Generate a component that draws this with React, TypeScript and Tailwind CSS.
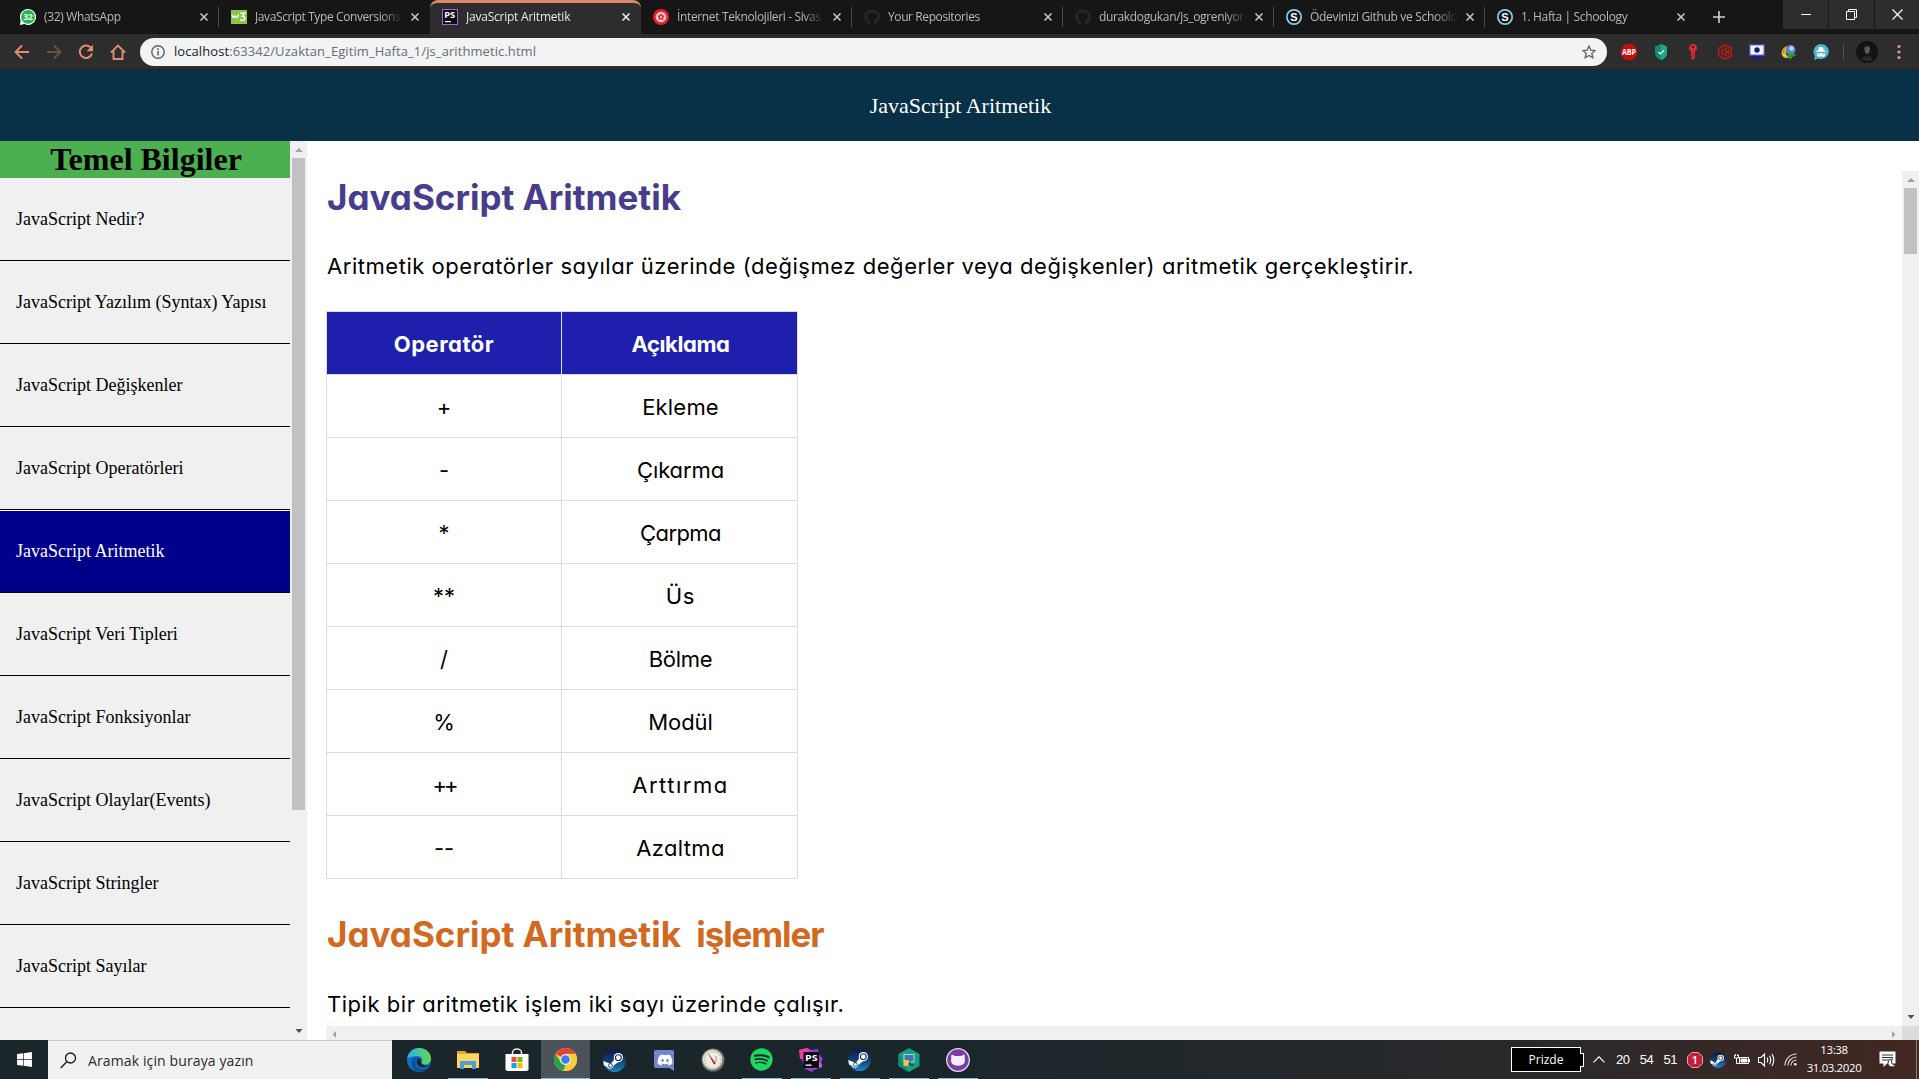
import type { ReactNode } from 'react'
import { FaDiscord, FaGithub, FaSpotify, FaWindows } from 'react-icons/fa'

/* ---------- small shared icons ---------- */

function CloseIcon({ light }: { light?: boolean }) {
  return (
    <svg width="8" height="8" viewBox="0 0 8 8" className="shrink-0">
      <path d="M0.5 0.5 7.5 7.5M7.5 0.5 0.5 7.5" stroke={light ? '#f0f0f0' : '#c9c9c9'} strokeWidth="1.5" fill="none" />
    </svg>
  )
}

function WhatsAppIcon() {
  return (
    <svg width="16" height="16" viewBox="0 0 16 16">
      <path d="M8 0a8 8 0 1 1-3.6 15.1L0 16l.6-4.700A8 8 0 0 1 8 0Z" fill="#fff" />
      <circle cx="8" cy="7.900" r="6.900" fill="#1fb84f" />
      <text x="8" y="11" textAnchor="middle" fontSize="8" fontWeight="700" fill="#fff" fontFamily="Open Sans, sans-serif">32</text>
    </svg>
  )
}

function W3Icon() {
  return (
    <svg width="16" height="14" viewBox="0 0 16 14">
      <rect width="16" height="14" fill="#8bc541" />
      <path d="M1 4.500c.3 3 2.300 3.500 3 1 .5 3 3 2.500 3.300-1" fill="none" stroke="#fff" strokeWidth="1.500" />
      <path d="M9.300 3.300h4.400L11.300 6.300c3.200-.2 3.300 4.200.3 4.200-1.300 0-2-.5-2.300-1.500" fill="none" stroke="#fff" strokeWidth="1.600" />
    </svg>
  )
}

function PhpStormTabIcon() {
  return (
    <svg width="16" height="16" viewBox="0 0 16 16">
      <rect x="0.500" y="0.500" width="15" height="15" fill="#0c0a10" stroke="#a55fd8" />
      <text x="2.200" y="9" fontSize="8.500" fontWeight="700" fill="#fff" fontFamily="Open Sans, sans-serif" textLength="11" lengthAdjust="spacingAndGlyphs">PS</text>
      <rect x="3" y="12" width="6" height="1.200" fill="#fff" />
    </svg>
  )
}

function UniversityIcon() {
  return (
    <svg width="16" height="16" viewBox="0 0 16 16">
      <circle cx="8" cy="8" r="8" fill="#e3202b" />
      <circle cx="8" cy="8" r="5.300" fill="#fbc4c6" />
      <path d="m8 4.200 1.200 2.100 2.600.5-1.700 1.900.3 2.500L8 10.100l-2.400 1.100.3-2.500-1.700-1.900 2.600-.5z" fill="#e3202b" />
      <circle cx="8" cy="8" r="0.900" fill="#fff" />
    </svg>
  )
}

function SchoologyIcon() {
  return (
    <svg width="16" height="16" viewBox="0 0 16 16">
      <circle cx="8" cy="8" r="8" fill="#8fd0e8" />
      <circle cx="8" cy="8" r="6.300" fill="#0f161b" />
      <text x="8" y="12" textAnchor="middle" fontSize="11" fontWeight="700" fill="#fff" fontFamily="Liberation Sans, sans-serif">S</text>
    </svg>
  )
}

/* ---------- browser window ---------- */

const tabs: { title: string; icon: ReactNode; active?: boolean; divider?: boolean; spacing: string }[] = [
  { title: '(32) WhatsApp', icon: <WhatsAppIcon />, divider: true, spacing: 'tracking-[-0.35px]' },
  { title: 'JavaScript Type Conversions', icon: <W3Icon />, spacing: 'tracking-[-0.4px]' },
  { title: 'JavaScript Aritmetik', icon: <PhpStormTabIcon />, active: true, spacing: 'tracking-[-0.23px]' },
  { title: 'İnternet Teknolojileri - Sivas', icon: <UniversityIcon />, divider: true, spacing: 'tracking-[-0.36px]' },
  { title: 'Your Repositories', icon: <FaGithub size={16} color="#22272c" />, divider: true, spacing: 'tracking-[-0.4px]' },
  { title: 'durakdogukan/js_ogreniyor', icon: <FaGithub size={16} color="#22272c" />, divider: true, spacing: 'tracking-[-0.35px]' },
  { title: 'Ödevinizi Github ve Schoology', icon: <SchoologyIcon />, divider: true, spacing: 'tracking-[-0.32px]' },
  { title: '1. Hafta | Schoology', icon: <SchoologyIcon />, spacing: 'tracking-[-0.35px]' },
]

function TabStrip() {
  return (
    <div className="flex h-[34px] bg-[#161616] pl-2">
      {tabs.map((tab) => (
        <div
          key={tab.title}
          className={
            tab.active
              ? 'flex h-[34px] w-[211px] items-center rounded-t-lg border-t-[3px] border-[#d98768] bg-[#2d2d2d] pr-[11px] pb-[3px] pl-3'
              : 'flex h-[34px] w-[211px] items-center pl-3'
          }
        >
          <span className="flex h-4 w-4 shrink-0 items-center">{tab.icon}</span>
          <span
            className={
              (tab.active ? 'text-[#e8e8e8] ' : 'text-[#b8b8b8] ') +
              'ml-2 w-[148px] shrink-0 overflow-hidden text-xs whitespace-nowrap [mask-image:linear-gradient(to_right,black_85%,transparent)] ' +
              tab.spacing
            }
          >
            {tab.title}
          </span>
          <span className="ml-2 flex shrink-0">
            <CloseIcon light={tab.active} />
          </span>
          {tab.divider && <span className="ml-[10px] h-5 w-px shrink-0 bg-[#4a4a4a]" />}
        </div>
      ))}
      <div className="flex w-[46px] items-center justify-center">
        <svg width="12" height="12" viewBox="0 0 12 12">
          <path d="M6 0v12M0 6h12" stroke="#d0d0d0" strokeWidth="1.600" />
        </svg>
      </div>
      <div className="ml-auto flex h-[29px] gap-px">
        <div className="flex w-[45px] items-center justify-center bg-[#2d2d2d]">
          <span className="h-px w-[10px] bg-white" />
        </div>
        <div className="flex w-[45px] items-center justify-center bg-[#2d2d2d]">
          <svg width="11" height="11" viewBox="0 0 11 11" fill="none" stroke="#fff">
            <path d="M0.500 2.500h8v8h-8zM2.500 2.500v-2h8v8h-2" />
          </svg>
        </div>
        <div className="flex w-[44px] items-center justify-center bg-[#2d2d2d]">
          <svg width="11" height="11" viewBox="0 0 11 11" fill="none" stroke="#fff" strokeWidth="1.200">
            <path d="M0.500 0.500l10 10M10.500 0.500l-10 10" />
          </svg>
        </div>
      </div>
    </div>
  )
}

function Extensions() {
  return (
    <div className="flex items-center gap-4">
      <svg width="16" height="16" viewBox="0 0 16 16">
        <path d="M4.700 0h6.600L16 4.700v6.600L11.300 16H4.700L0 11.300V4.700z" fill="#c70d0d" />
        <text x="1" y="11" fontSize="8.500" fontWeight="700" fill="#fff" fontFamily="Open Sans, sans-serif" textLength="14" lengthAdjust="spacingAndGlyphs">ABP</text>
      </svg>
      <svg width="16" height="16" viewBox="0 0 16 16">
        <path d="M8 0l6 2.500v6c0 4-2.500 6-6 7.500-3.500-1.500-6-3.500-6-7.500v-6z" fill="#138a72" />
        <path d="M8 0l6 2.500v6c0 4-2.500 6-6 7.500z" fill="#1ea688" />
        <path d="M5.500 8l2 2 3.500-3.800" fill="none" stroke="#fff" strokeWidth="1.200" />
      </svg>
      <svg width="16" height="16" viewBox="0 0 16 16">
        <path d="M8 0a4 4 0 0 1 2 7.500V14l-2 2-2-2V7.500A4 4 0 0 1 8 0z" fill="#d8293a" />
        <circle cx="8" cy="3" r="1.200" fill="#2d2d2d" />
        <path d="M8 8v6" stroke="#8d1b28" strokeWidth="0.800" />
      </svg>
      <svg width="16" height="16" viewBox="0 0 16 16" fill="none" stroke="#d31414" strokeWidth="1.300">
        <path d="M8 0.800l6.300 3.600v7.200L8 15.200l-6.300-3.600V4.400z" />
        <path d="M7.500 5 4.800 6.500v3L7.500 11M9 2.500v11M9 8h2.500M11.800 5v6" />
      </svg>
      <svg width="16" height="16" viewBox="0 0 16 16">
        <path d="M0 9h16v3.500L8 16l-8-3.500z" fill="#20207c" />
        <rect x="0.700" y="0.700" width="14.600" height="10.600" fill="#f4f6ff" stroke="#3f49bd" strokeWidth="1.400" />
        <circle cx="8" cy="6" r="2.700" fill="#1b1f6f" />
      </svg>
      <svg width="16" height="16" viewBox="0 0 16 16">
        <circle cx="9.500" cy="6" r="5" fill="#5a86cf" />
        <circle cx="10.500" cy="4.500" r="2.200" fill="#c5d9f3" />
        <path d="M6 2C1 4 -.5 9 1.500 12c1.500 2.300 5 2.500 7 1C4.500 12 3.500 7 6 2z" fill="#e8cf3a" />
        <path d="M6 2c-2.500 2-3.500 5-2.500 8L1.500 9C2 6 3.500 3.500 6 2z" fill="#d9652c" />
        <path d="M7 8.500l9 2.500-4 1.500L9 16l-1-3-4-1 3-.5z" fill="#2f9c27" />
      </svg>
      <svg width="16" height="16" viewBox="0 0 16 16">
        <path d="M8 0a8 7.500 0 1 1-3 14.500L1 16l1-3.600A7.800 7.800 0 0 1 8 0z" fill="#4fb4cf" />
        <path d="M5.300 6.500 6 3h4l.7 3.500h2v1.300H3.300V6.500z" fill="#fff" />
        <path d="M4 9h8v2.500l-2 1.500h-1L8 11.500 7 13H6l-2-1.500z" fill="#fff" />
        <path d="M5 10h2M9 10h2" stroke="#4fb4cf" />
      </svg>
    </div>
  )
}

function Toolbar() {
  return (
    <div className="flex h-9 items-center border-b border-[#222] bg-[#2d2d2d] pt-px pl-[14px]">
      <div className="flex items-center gap-4 text-[#e08d6c]">
        <svg width="16" height="16" viewBox="0 0 16 16" fill="none" stroke="currentColor" strokeWidth="1.900">
          <path d="M15 8H2M8 1.500 1.500 8 8 14.500" />
        </svg>
        <svg width="16" height="16" viewBox="0 0 16 16" fill="none" stroke="#70503f" strokeWidth="1.900">
          <path d="M1 8h13M8 1.500 14.500 8 8 14.500" />
        </svg>
        <svg width="16" height="16" viewBox="0 0 16 16" fill="none" stroke="currentColor" strokeWidth="2">
          <path d="M13.300 4.500A6.200 6.200 0 1 0 14 9.500" />
          <path d="M15 0.800v6.400H8.600z" fill="currentColor" stroke="none" />
        </svg>
        <svg width="16" height="16" viewBox="0 0 16 16" fill="none" stroke="currentColor" strokeWidth="1.900">
          <path d="M1 8.500 8 1.500l7 7M3.500 7v8h9V7" />
        </svg>
      </div>
      <div className="ml-[14px] flex h-7 w-[1467px] items-center rounded-full bg-[#f1f3f4] pr-[11px] pl-[11px]">
        <svg width="14" height="14" viewBox="0 0 14 14" fill="none" stroke="#5f6368" strokeWidth="1.400">
          <circle cx="7" cy="7" r="6.200" />
          <path d="M7 6v4.500M7 3.300v1.600" strokeWidth="1.600" />
        </svg>
        <span className="ml-[9px] text-[13px] tracking-[0.08px] text-[#6a6d71]">
          <span className="text-[#202124]">localhost</span>:63342/Uzaktan_Egitim_Hafta_1/js_arithmetic.html
        </span>
        <svg width="14" height="14" viewBox="0 0 16 16" className="ml-auto" fill="none" stroke="#5f6368" strokeWidth="1.500">
          <path d="M8 1.200l2 4.700 5 .4-3.800 3.300 1.200 5L8 12l-4.400 2.600 1.200-5L1 6.300l5-.4z" />
        </svg>
      </div>
      <div className="ml-[14px] flex items-center">
        <Extensions />
        <span className="ml-[14px] h-4 w-px bg-[#6b4a3e]" />
        <svg width="22" height="22" viewBox="0 0 22 22" className="ml-[12px]">
          <circle cx="11" cy="11" r="11" fill="#131313" />
          <path d="M8.500 7.500a2.700 3.200 0 0 1 5.400 0l-.4 3.500-2.300 2.600L8.900 11z" fill="#5a5a5a" />
          <path d="M8.300 7.300c0-4.500 6-4.500 5.900 0l-1-1.500H9.300z" fill="#1d1d1d" />
          <path d="M5.500 18.500 9 14.500l2.200 1.500 2.300-1.500 3.500 4A11 11 0 0 1 5.500 18.500z" fill="#292929" />
        </svg>
        <svg width="4" height="16" viewBox="0 0 4 16" className="ml-[19px]" fill="#e39c86">
          <circle cx="2" cy="2.500" r="1.600" />
          <circle cx="2" cy="8" r="1.600" />
          <circle cx="2" cy="13.500" r="1.600" />
        </svg>
      </div>
    </div>
  )
}

/* ---------- page content ---------- */

const menu = [
  'JavaScript Nedir?',
  'JavaScript Yazılım (Syntax) Yapısı',
  'JavaScript Değişkenler',
  'JavaScript Operatörleri',
  'JavaScript Aritmetik',
  'JavaScript Veri Tipleri',
  'JavaScript Fonksiyonlar',
  'JavaScript Olaylar(Events)',
  'JavaScript Stringler',
  'JavaScript Sayılar',
]

function Arrow({ d, color }: { d: string; color: string }) {
  return (
    <svg width="8" height="8" viewBox="0 0 8 8" fill={color} className="shrink-0">
      <path d={d} />
    </svg>
  )
}

const UP = 'M0 6 4 2l4 4z'
const DOWN = 'M0.500 2h7L4 6z'
const LEFT = 'M6 1v7L2.500 4.500z'
const RIGHT = 'M2 1v7l3.500-3.500z'

function Sidebar() {
  return (
    <div className="flex h-[899px] w-[307px] shrink-0 bg-[#f0f0f0]">
      <nav className="h-[899px] w-[290px] overflow-hidden font-['Liberation_Serif',serif] text-black">
        <h1 className="h-[37px] bg-[#4caf50] pl-0.5 text-center text-[32px] leading-[37px] font-bold">Temel Bilgiler</h1>
        {menu.map((item) =>
          item === 'JavaScript Aritmetik' ? (
            <div key={item} className="flex h-[83px] items-center border-t border-b border-t-white border-b-black bg-[#00008b] px-4 pb-px text-lg text-white">
              {item}
            </div>
          ) : (
            <div key={item} className="flex h-[83px] items-center border-b border-black px-4 text-lg">
              {item}
            </div>
          ),
        )}
      </nav>
      <div className="flex w-[17px] flex-col items-center py-[5px]">
        <Arrow d={UP} color="#a3a3a3" />
        <div className="mt-1 h-[652px] w-[13px] bg-[#c1c1c1]" />
        <div className="mt-auto">
          <Arrow d={DOWN} color="#505050" />
        </div>
      </div>
    </div>
  )
}

const operators: { sign: string; name: string; spacing: string }[] = [
  { sign: '+', name: 'Ekleme', spacing: 'tracking-[0.2px]' },
  { sign: '-', name: 'Çıkarma', spacing: 'tracking-[-0.1px]' },
  { sign: '*', name: 'Çarpma', spacing: 'tracking-[-0.6px]' },
  { sign: '**', name: 'Üs', spacing: 'tracking-[0.8px]' },
  { sign: '/', name: 'Bölme', spacing: 'tracking-[-0.3px]' },
  { sign: '%', name: 'Modül', spacing: 'tracking-[-0.1px]' },
  { sign: '++', name: 'Arttırma', spacing: 'tracking-[1.5px]' },
  { sign: '--', name: 'Azaltma', spacing: 'tracking-[0.35px]' },
]

function Lesson() {
  return (
    <main className="h-[885px] flex-1 overflow-hidden pl-[19px] font-['Comic_Sans_MS',Inter,sans-serif] text-[22px] text-black [font-feature-settings:'cv11']">
      <h1 className="mt-[31px] pl-px text-[35px] leading-[50px] font-bold text-[#483d8b]">JavaScript Aritmetik</h1>
      <p className="mt-[27px] pl-px leading-[34px] tracking-[0.54px]">
        Aritmetik operatörler sayılar üzerinde (değişmez değerler veya değişkenler) aritmetik gerçekleştirir.
      </p>
      <div className="mt-7 w-[472px] border-t border-l border-[#dcdcdc] text-center">
        <div className="flex h-[63px] bg-[#1f1fad] leading-[62px] font-bold text-white">
          <div className="w-[235px] border-r border-b border-[#dcdcf4] pt-px tracking-[0.5px]">Operatör</div>
          <div className="w-[236px] border-r border-b border-[#dcdcf4] pt-px pl-0.5 tracking-[-0.4px]">Açıklama</div>
        </div>
        {operators.map(({ sign, name, spacing }) => (
          <div key={sign} className="flex h-[63px] leading-[62px]">
            <div
              className={
                sign === '++'
                  ? 'w-[235px] border-r border-b border-[#dcdcdc] pt-px tracking-[-3px]'
                  : 'w-[235px] border-r border-b border-[#dcdcdc] pt-px'
              }
            >
              {sign}
            </div>
            <div className={'w-[236px] border-r border-b border-[#dcdcdc] pt-px pl-0.5 ' + spacing}>{name}</div>
          </div>
        ))}
      </div>
      <h1 className="mt-[30px] pl-px text-[35px] leading-[50px] font-bold text-[#d2691e]">
        JavaScript Aritmetik <span className="ml-[7px] tracking-[-1.100px]">işlemler</span>
      </h1>
      <p className="mt-7 pl-px leading-[34px] tracking-[0.53px]">Tipik bir aritmetik işlem iki sayı üzerinde çalışır.</p>
    </main>
  )
}

function Page() {
  return (
    <div className="h-[970px] bg-white">
      <header className="flex h-[71px] items-center justify-center bg-[#083147] pl-0.5 font-['Liberation_Serif',serif] text-[22px] text-white">
        JavaScript Aritmetik
      </header>
      <div className="flex h-[899px]">
        <Sidebar />
        <div className="flex min-w-0 flex-1 flex-col">
          <div className="flex h-[885px]">
            <Lesson />
            <div className="mt-[30px] flex h-[855px] w-[17px] flex-col items-center bg-[#f0f0f0] py-[5px]">
              <Arrow d={UP} color="#a3a3a3" />
              <div className="mt-1 h-[66px] w-[13px] bg-[#c1c1c1]" />
              <div className="mt-auto">
                <Arrow d={DOWN} color="#505050" />
              </div>
            </div>
          </div>
          <div className="ml-[19px] flex h-[14px] bg-[#f0f0f0]">
            <div className="flex flex-1 items-center justify-between px-1 pt-px">
              <Arrow d={LEFT} color="#a3a3a3" />
              <Arrow d={RIGHT} color="#a3a3a3" />
            </div>
            <div className="w-[17px] bg-[#dcdcdc]" />
          </div>
        </div>
      </div>
    </div>
  )
}

/* ---------- taskbar ---------- */

function EdgeIcon() {
  return (
    <svg width="24" height="24" viewBox="0 0 24 24">
      <defs>
        <linearGradient id="edgeTop" x1="0" x2="1">
          <stop offset="0" stopColor="#2bb3e6" />
          <stop offset="1" stopColor="#62d84e" />
        </linearGradient>
      </defs>
      <circle cx="12" cy="12" r="12" fill="#1270c4" />
      <path d="M0.300 10C1.500 4 6 0 12 0c7 0 12 5 12 10.500 0 4-3 6-6.200 6-2.500 0-4-1-3.200-2.300 2-3-.3-6.200-4-6.200-4.500 0-8.500 1.500-10.300 2z" fill="url(#edgeTop)" />
      <path d="M10.500 9C7 11 7 18 13 20.500c4 1.500 7-.5 8.500-1.500A12 12 0 0 1 12 24C6 23 3.500 17 5 13c1-2.500 3-4 5.500-4z" fill="#0c4f9b" />
      <path d="M11 10c-3 3-1 9 4.500 9.500 3 .2 5-1 6.800-2.500-2 .8-6 1-7.700-1.800-1.500-1 1.300-4-3.600-5.200z" fill="#1a2830" />
    </svg>
  )
}

function FolderIcon() {
  return (
    <svg width="22" height="20" viewBox="0 0 22 20">
      <path d="M0 1h8l2 2h12v15H0z" fill="#e3a52c" />
      <rect y="4" width="22" height="14" fill="#fcd462" />
      <path d="M3 11h16v8h-4v-4H7v4H3z" fill="#4a9fdc" />
    </svg>
  )
}

function StoreIcon() {
  return (
    <svg width="24" height="24" viewBox="0 0 24 24">
      <path d="M7.500 7V4.500a4.500 3.500 0 0 1 9 0V7" fill="none" stroke="#e8eaec" strokeWidth="1.500" />
      <path d="M0.500 6h23v15.500L22 23H2l-1.500-1.500z" fill="#fff" />
      <rect x="6.500" y="9" width="5" height="5" fill="#f25022" />
      <rect x="12.500" y="9" width="5" height="5" fill="#7fba00" />
      <rect x="6.500" y="15" width="5" height="5" fill="#00a4ef" />
      <rect x="12.500" y="15" width="5" height="5" fill="#ffb900" />
    </svg>
  )
}

function ChromeIcon() {
  return (
    <svg width="23" height="23" viewBox="0 0 24 24">
      <circle cx="12" cy="12" r="12" fill="#f8cc3c" />
      <path d="M12 12 1.600 6A12 12 0 0 1 22.400 6z" fill="#e24435" />
      <path d="M12 6h10.400A12 12 0 0 1 12 24l5-9z" fill="#f8cc3c" />
      <path d="M1.600 6 7 15l5 3-2.500 5.800A12 12 0 0 1 1.600 6z" fill="#2ba14b" />
      <circle cx="12" cy="12" r="5.700" fill="#f3f3f3" />
      <circle cx="12" cy="12" r="4.500" fill="#3f7ee8" />
    </svg>
  )
}

function SteamIcon({ size }: { size: 'large' | 'small' }) {
  return (
    <svg viewBox="0 0 24 24" className={size === 'large' ? 'h-[23px] w-[23px]' : 'h-4 w-4'}>
      <defs>
        <linearGradient id="steamFill" x1="0" y1="0" x2="0" y2="1">
          <stop offset="0" stopColor="#10193f" />
          <stop offset="0.500" stopColor="#123b73" />
          <stop offset="1" stopColor="#1b86c0" />
        </linearGradient>
      </defs>
      <circle cx="12" cy="12" r="12" fill="url(#steamFill)" />
      <path d="M0.300 12.500 8 15.600l5-6.100 3 4-5 4A3.700 3.700 0 0 1 4 18.500l-3-1.300z" fill="#fff" />
      <circle cx="16" cy="9" r="4.800" fill="#fff" />
      <circle cx="16" cy="9" r="3" fill="#fff" stroke="#16305f" strokeWidth="1.200" />
      <circle cx="7.800" cy="17.300" r="2" fill="none" stroke="#16305f" strokeWidth="0.900" />
    </svg>
  )
}

function DiscordIcon() {
  return (
    <svg width="20" height="22" viewBox="0 0 20 22">
      <path d="M2 1h16a2 2 0 0 1 2 2v19l-4.500-3H2a2 2 0 0 1-2-2V3a2 2 0 0 1 2-2z" fill="#7386cc" />
      <FaDiscord x="3" y="3" width="14" height="14" color="#fff" />
    </svg>
  )
}

function GaugeIcon() {
  return (
    <svg width="24" height="24" viewBox="0 0 24 24">
      <circle cx="12" cy="12" r="11.500" fill="#75736f" />
      <circle cx="11.500" cy="11.500" r="10" fill="#dedbd5" />
      <circle cx="12" cy="12" r="8" fill="#efece6" stroke="#a9a49b" strokeWidth="1" strokeDasharray="1 2" />
      <path d="M6.500 4.500 15 15.500l-2 1z" fill="#b5261e" />
      <path d="M15 8v6" stroke="#8a8580" strokeWidth="0.800" />
    </svg>
  )
}

function PhpStormIcon() {
  return (
    <svg width="24" height="24" viewBox="0 0 24 24">
      <path d="M0 2 8 0l5 2 6-1 1 5 4 5-2 3 1 5-7 1-3 4-7-3-3-9z" fill="#8f3fe0" />
      <path d="M0 2 8 0l3 4-8 7-2 0z" fill="#f13c9a" />
      <path d="M14 22l9-3-1-5-5 3z" fill="#d45af0" />
      <rect x="4.500" y="4" width="15.500" height="16" fill="#08060b" />
      <text x="6" y="12.500" fontSize="9.500" fontWeight="700" fill="#fff" fontFamily="Open Sans, sans-serif" textLength="12.500" lengthAdjust="spacingAndGlyphs">PS</text>
      <rect x="6.500" y="16.500" width="6" height="1.300" fill="#fff" />
    </svg>
  )
}

function HexIcon() {
  return (
    <svg width="24" height="24" viewBox="0 0 24 24">
      <path d="M12 0l10.500 6v12L12 24 1.500 18V6z" fill="#12a182" />
      <path d="M12 24 1.500 18V6z" fill="#0c9073" />
      <rect x="7" y="6.500" width="10" height="7.500" fill="#3c78a8" stroke="#b9d3e4" strokeWidth="1" />
      <rect x="6.500" y="12" width="5" height="6" fill="#f2c14a" />
      <path d="M13 14v3h4" stroke="#25465e" strokeWidth="1.500" fill="none" />
    </svg>
  )
}

function GithubDesktopIcon() {
  return (
    <svg width="24" height="24" viewBox="0 0 24 24">
      <circle cx="12" cy="12" r="11.300" fill="#7a3da5" stroke="#e7dcef" strokeWidth="1.300" />
      <path d="M5.800 6.500 9 8h6l3.200-1.500c.8 1.500.6 2.700.4 3.500 1.500 5-1.600 7.700-6.600 7.700S3.900 15 5.400 10c-.2-.8-.4-2 .4-3.500z" fill="#f6effa" />
    </svg>
  )
}

const apps: { name: string; icon: ReactNode; state?: 'open' | 'focused' }[] = [
  { name: 'edge', icon: <EdgeIcon /> },
  { name: 'explorer', icon: <FolderIcon />, state: 'open' },
  { name: 'store', icon: <StoreIcon /> },
  { name: 'chrome', icon: <ChromeIcon />, state: 'focused' },
  { name: 'steam', icon: <SteamIcon size="large" /> },
  { name: 'discord', icon: <DiscordIcon /> },
  { name: 'gauge', icon: <GaugeIcon /> },
  { name: 'spotify', icon: <FaSpotify size={23} color="#1ed760" />, state: 'open' },
  { name: 'phpstorm', icon: <PhpStormIcon />, state: 'open' },
  { name: 'steam-window', icon: <SteamIcon size="large" />, state: 'open' },
  { name: 'remote', icon: <HexIcon />, state: 'open' },
  { name: 'github', icon: <GithubDesktopIcon />, state: 'open' },
]

function Tray() {
  return (
    <div className="ml-auto flex items-center text-white">
      <div className="flex items-center">
        <div className="flex h-[25px] w-[70px] items-center justify-center border border-white bg-black text-xs">Prizde</div>
        <div className="-ml-px h-[14px] w-[4px] border border-l-0 border-white bg-black" />
      </div>
      <svg width="12" height="7" viewBox="0 0 12 7" className="ml-[9px]" fill="none" stroke="#fff" strokeWidth="1.200">
        <path d="M0.500 6.300 6 0.800l5.500 5.500" />
      </svg>
      <div className="ml-[11px] flex w-[61px] justify-between pt-px font-['Liberation_Sans',sans-serif] text-[13px] tracking-[-0.5px]">
        <span>20</span>
        <span>54</span>
        <span>51</span>
      </div>
      <svg width="16" height="16" viewBox="0 0 16 16" className="ml-[10px]">
        <path d="M4.700 0.500h6.600l4.200 4.200v6.600l-4.200 4.200H4.700L0.500 11.300V4.700z" fill="#c41f38" stroke="#e9a5ae" />
        <text x="8" y="12" textAnchor="middle" fontSize="11" fontWeight="600" fill="#fff" fontFamily="Open Sans, sans-serif">1</text>
      </svg>
      <span className="ml-[7px]">
        <SteamIcon size="small" />
      </span>
      <svg width="16" height="12" viewBox="0 0 16 12" className="ml-2" fill="none" stroke="#fff">
        <path d="M5.500 3.500h9v6h-9zM15.500 5v3" />
        <path d="M7 5h6v3H7z" fill="#fff" />
        <path d="M0.500 1v3h4V1M1.500 0v2M3.500 0v2M2.500 4v5.500h3" />
      </svg>
      <svg width="17" height="14" viewBox="0 0 17 14" className="ml-2" fill="none" stroke="#fff" strokeWidth="1.100">
        <path d="M0.500 4.500h2.500L6.500 1v12L3 9.500H0.500z" />
        <path d="M9 4.500q1.500 2.500 0 5M11.500 2.800q2.500 4.200 0 8.400M14 1q3.500 6 0 12" />
      </svg>
      <svg width="13" height="13" viewBox="0 0 13 13" className="ml-[9px]" fill="none" stroke="#e4dddb" strokeWidth="1.100">
        <path d="M1 12.500A11.500 11.500 0 0 1 12.500 1M4 12.500A8.500 8.500 0 0 1 12.500 4M7 12.500A5.500 5.500 0 0 1 12.500 7" />
        <circle cx="11.300" cy="11.300" r="1.300" fill="#fff" stroke="none" />
      </svg>
      <div className="ml-[9px] flex w-[56px] flex-col items-center pb-px text-[11.5px] leading-[18px] tracking-[-0.4px] whitespace-nowrap">
        <span>13:38</span>
        <span>31.03.2020</span>
      </div>
      <svg width="17" height="17" viewBox="0 0 17 17" className="ml-[17px]">
        <path d="M0.500 0.500h16v12H8L4.500 16v-3.500h-4z" fill="#fff" />
        <path d="M3 4h11M3 6.500h11M3 9h7" stroke="#3a2a27" strokeWidth="1" />
        <path d="M13.500 8a4 4 0 1 0 3 6 3.500 3.500 0 0 1-3-6z" fill="#fff" stroke="#3a2a27" strokeWidth="1" />
      </svg>
      <span className="mr-[2px] ml-[20px] h-[39px] w-px bg-[#8a7a77]" />
    </div>
  )
}

function Taskbar() {
  return (
    <div className="flex h-[39px] bg-linear-to-r from-[#1b262b] from-50% via-[#29292b] via-80% to-[#432722]">
      <div className="flex w-12 items-center justify-center">
        <FaWindows size={17} color="#fff" />
      </div>
      <div className="flex w-[344px] items-center border-t border-[#c8c8c8] bg-[#f1f1f1] pt-px pl-3 text-[#2b2b2b]">
        <svg width="17" height="17" viewBox="0 0 17 17" fill="none" stroke="#1a1a1a" strokeWidth="1.300">
          <circle cx="10.500" cy="6" r="5" />
          <path d="M6.800 9.700 0.700 16" />
        </svg>
        <span className="ml-[11px] text-sm tracking-[0.12px]">Aramak için buraya yazın</span>
      </div>
      <div className="flex pl-[2px]">
        {apps.map((app) => (
          <div
            key={app.name}
            className={
              app.state === 'focused'
                ? 'flex w-[49px] flex-col items-center border-b border-[#76b9ed] bg-[#4a5359] pt-px'
                : 'flex w-[49px] flex-col items-center pt-px'
            }
          >
            <span className="flex flex-1 items-center">{app.icon}</span>
            {app.state === 'open' && <span className="h-px w-10 bg-[#76b9ed]" />}
          </div>
        ))}
      </div>
      <Tray />
    </div>
  )
}

export default function App() {
  return (
    <div className="h-[1079px] w-[1919px] overflow-hidden bg-white font-['Open_Sans',sans-serif]">
      <TabStrip />
      <Toolbar />
      <Page />
      <Taskbar />
    </div>
  )
}
